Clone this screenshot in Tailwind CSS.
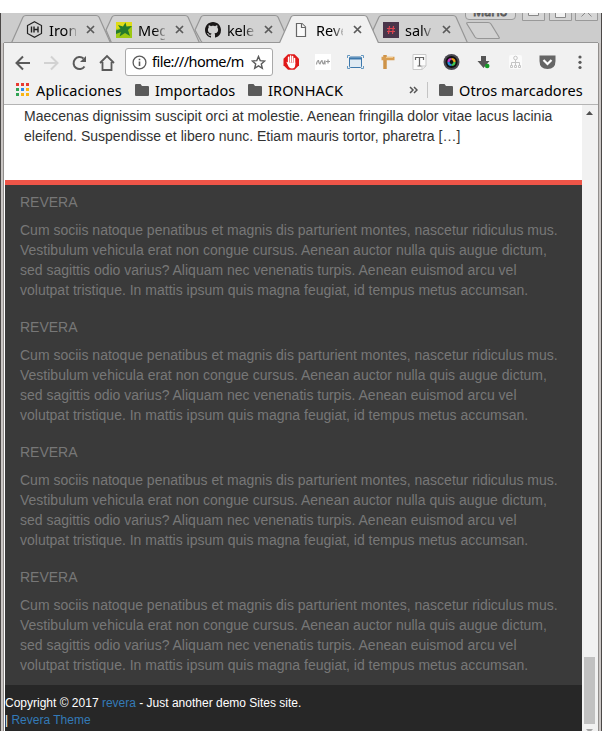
<!DOCTYPE html>
<html lang="es">
<head>
<meta charset="utf-8">
<title>Revera</title>
<script src="https://cdn.jsdelivr.net/npm/@tailwindcss/browser@4"></script>
</head>
<body class="w-[602px] h-[744px] overflow-hidden bg-white py-[13px]">
<div class="relative flex h-[718px] flex-col overflow-hidden border-l border-[#4b4847] bg-[#cccccc] font-['Noto_Sans',sans-serif] text-black">
  <!-- Tab strip -->
  <header class="relative h-[30px] shrink-0">
    <svg class="absolute -left-px top-0" width="602" height="30" viewBox="0 13 602 30" fill="none">
      <g fill="#d2d2d2" stroke="#969696" stroke-width="1.2">
        <path d="M373 30L379 17Q380 15.500 382 15.500H453Q455 15.500 456 17L468 44H374L373 42Z"/>
        <path d="M195 30L201 17Q202 15.500 204 15.500H275Q277 15.500 278 17L290 44H206Q203 44 201 41Z"/>
        <path d="M106 30L112 17Q113 15.500 115 15.500H185Q187 15.500 188 17L200 44H112Z"/>
        <path d="M11 44L23 17Q24 15.500 26 15.500H96Q98 15.500 99 17L111 44Z"/>
        <path d="M468 22.500H488Q490 22.500 491 24L499 37Q500 38.500 498 38.500H478Q476 38.500 475 37L467 24Q466 22.500 468 22.500Z"/>
      </g>
      <path d="M4 42.500H598" stroke="#969696"/>
      <path d="M279 44L291 17Q292 15.500 294 15.500H364Q366 15.500 367 17L379 44Z" fill="#f1f1f1" stroke="#969696" stroke-width="1.2"/>
      <g fill="#d5d5d5" stroke="#999">
        <path d="M465.500 10V16Q465.500 19.500 469 19.500H512Q515.500 19.500 515.500 16V10Z"/>
        <path d="M522.500 10V20.500H544.500V10ZM549.500 10V20.500H571.500V10ZM575.500 10V20.500H597.500V10Z"/>
      </g>
      <path d="M528.500 12V15.500H538.500V12M555.500 12V17.500H565.500V12M581.500 16.500L585 13M591.500 16.500L588 13" stroke="#888" fill="#f2f2f2"/>
      <path d="M601.500 13V43" stroke="#4b4847"/>
    </svg>
    <div class="absolute left-[472px] top-0 h-[5px] w-10 overflow-hidden text-[12.5px]"><span class="block -mt-[9px] leading-[16px] text-[#eee] [-webkit-text-stroke:0.9px_#555]">Mario</span></div>
    <div class="relative flex h-[30px] items-center pl-[25px] pt-[3px] text-[14.5px] leading-[20px]">
      <div class="flex w-[89px] items-center">
        <svg class="mr-[6px] shrink-0" width="17" height="17" viewBox="0 0 17 17" fill="none" stroke="#222"><path d="M8.500 .8L15.500 4.500V12.500L8.500 16.200L1.500 12.500V4.500Z" stroke-width="1.200"/><path d="M5.500 5.500V11.500M8 5.500V11.500M12 5.500V11.500M8 8.500H12" stroke-width="1.400"/></svg>
        <span class="w-[27px] overflow-hidden bg-linear-to-r from-black from-60% to-black/20 bg-clip-text text-transparent">Iron</span>
        <svg class="ml-[9.500px]" width="9" height="9" viewBox="0 0 9 9" stroke="#5a5a5a" stroke-width="1.700"><path d="M1 1L8 8M8 1L1 8"/></svg>
      </div>
      <div class="flex w-[89px] items-center pl-px">
        <svg class="mr-[6px] shrink-0" width="16" height="16" viewBox="0 0 16 16"><rect width="16" height="16" fill="#9cc814"/><path d="M0 0H16V4L0 7Z" fill="#e0dc18"/><path d="M9.500 .5L10.500 4.500L16 4L12 8L14 14L9 11L3.500 14.500L5 10L0 12V8.500L4.500 7L2 3L7 4.500Z" fill="#247a2c"/></svg>
        <span class="w-[27px] overflow-hidden bg-linear-to-r from-black from-60% to-black/20 bg-clip-text text-transparent">Meg</span>
        <svg class="ml-[9.500px]" width="9" height="9" viewBox="0 0 9 9" stroke="#5a5a5a" stroke-width="1.700"><path d="M1 1L8 8M8 1L1 8"/></svg>
      </div>
      <div class="flex w-[89px] items-center pl-px">
        <svg class="mr-[6px] shrink-0" width="16" height="16" viewBox="0 0 16 16" fill="#191717"><path d="M8 0C3.580 0 0 3.580 0 8c0 3.540 2.290 6.530 5.470 7.590.4.070.55-.17.55-.38 0-.19-.01-.82-.01-1.490-2.010.37-2.530-.49-2.690-.94-.09-.23-.48-.94-.82-1.130-.28-.15-.68-.52-.01-.53.63-.01 1.080.58 1.230.82.72 1.210 1.870.87 2.330.66.07-.52.28-.87.51-1.070-1.780-.2-3.640-.89-3.640-3.950 0-.87.31-1.590.82-2.150-.08-.2-.36-1.020.08-2.120 0 0 .67-.21 2.200.82.64-.18 1.320-.27 2-.27s1.360.09 2 .27c1.530-1.040 2.200-.82 2.200-.82.44 1.100.16 1.920.08 2.120.51.56.82 1.270.82 2.150 0 3.070-1.870 3.750-3.650 3.950.29.25.54.73.54 1.480 0 1.070-.01 1.930-.01 2.200 0 .21.15.46.55.38A8.010 8.010 0 0 0 16 8c0-4.420-3.580-8-8-8z"/></svg>
        <span class="w-[27px] overflow-hidden bg-linear-to-r from-black from-60% to-black/20 bg-clip-text tracking-[-0.2px] text-transparent">kele</span>
        <svg class="ml-[9.500px]" width="9" height="9" viewBox="0 0 9 9" stroke="#5a5a5a" stroke-width="1.700"><path d="M1 1L8 8M8 1L1 8"/></svg>
      </div>
      <div class="flex w-[89px] items-center">
        <svg class="mr-[7px] shrink-0" width="16" height="16" viewBox="0 0 16 16" fill="#fafafa" stroke="#666" stroke-width="1.200"><path d="M3.500 1.500H9L12.500 5V14.500H3.500Z"/><path d="M8.500 1.500V5.500H12.500"/></svg>
        <span class="w-[27px] overflow-hidden bg-linear-to-r from-black from-60% to-black/20 bg-clip-text text-transparent">Reve</span>
        <svg class="ml-[9.500px]" width="9" height="9" viewBox="0 0 9 9" stroke="#5a5a5a" stroke-width="1.700"><path d="M1 1L8 8M8 1L1 8"/></svg>
      </div>
      <div class="flex w-[89px] items-center pl-px">
        <svg class="mr-[6px] shrink-0" width="16" height="16" viewBox="0 0 16 16"><rect width="16" height="16" fill="#49354a"/><path d="M6.500 4L5.500 12M10.500 4L9.500 12M4 6.500H12M4 9.500H12" stroke="#dd4450" stroke-width="1.200"/></svg>
        <span class="w-[27px] overflow-hidden bg-linear-to-r from-black from-60% to-black/20 bg-clip-text text-transparent">salv</span>
        <svg class="ml-[9.500px]" width="9" height="9" viewBox="0 0 9 9" stroke="#5a5a5a" stroke-width="1.700"><path d="M1 1L8 8M8 1L1 8"/></svg>
      </div>
    </div>
  </header>

  <div class="flex min-h-0 flex-1 border-l-2 border-[#cac6c4]">
   <div class="flex min-w-0 flex-1 flex-col border-l border-[#918e8c] bg-[#f1f1f1]">
    <!-- Toolbar -->
    <div class="flex h-[38px] shrink-0 items-center pl-[11px]">
      <svg class="mt-px shrink-0" width="101" height="18" viewBox="15 53 101 18" fill="none" stroke="#5a5a5a" stroke-width="2"><path d="M30 62H17M23 55.500L16.500 62L23 68.500"/><path d="M44 62H57M51 55.500L57.500 62L51 68.500" stroke="#d2d2d2"/><path d="M84.500 65.500A6 6 0 1 1 83.500 57.500"/><path d="M86 55V61H80Z" fill="#5a5a5a" stroke="none"/><path d="M100 62L107 55L114 62M102.500 61V69H111.500V61" stroke-width="1.800"/></svg>
      <div class="ml-[9px] flex h-[28px] w-[148px] shrink-0 items-center rounded-[3px] border border-[#a9a9a9] bg-white pl-[5.500px]">
        <svg class="shrink-0" width="15" height="15" viewBox="0 0 15 15" fill="none" stroke="#5a5a5a"><circle cx="7.500" cy="7.500" r="6.400" stroke-width="1.300"/><path d="M7.500 6.500V11M7.500 3.700V5.300" stroke-width="1.600"/></svg>
        <span class="ml-[5.500px] w-[97px] whitespace-nowrap text-[14.500px] tracking-[-0.52px]">file:///home/m</span>
        <svg class="ml-[2px] shrink-0" width="15" height="15" viewBox="0 0 15 15" fill="none" stroke="#5a5a5a" stroke-width="1.400"><path d="M7.500 1.500L9.200 5.600L13.700 6L10.300 8.900L11.300 13.300L7.500 10.900L3.700 13.300L4.700 8.900L1.300 6L5.800 5.600Z"/></svg>
      </div>
      <svg class="ml-[9px] shrink-0" width="306" height="20" viewBox="282 52 306 20" fill="none">
        <path d="M288 54.300H294.500L299 58.800V65.200L294.500 69.700H288L283.500 65.200V58.800Z" fill="#e01818"/><path d="M288.600 57.200V63M290.600 56V62M292.600 56.500V62M294.500 58.500V64" stroke="#fff" stroke-width="1.500" stroke-linecap="round"/><path d="M286.300 61.800L288.300 62.500H295.200V65.500Q295 68.300 292 68.500Q289.500 68.500 288.500 66.500Z" fill="#fff"/>
        <rect x="315" y="54" width="16" height="16" fill="#fff"/><path d="M316.500 64.500Q317 60.500 318.500 60.500Q319 64 320 64Q321 60.500 322 60.500Q322.500 64 323.500 64L325 60.500V64.500M326 61.500H330M328 59.500V63.500" stroke="#999" stroke-width="1.200"/>
        <rect x="349.500" y="57" width="12" height="10.500" rx="1" fill="#dfeaf3" stroke="#3d78ac"/><path d="M349.500 58.500H361.500" stroke="#3d78ac" stroke-width="2"/><path d="M347.500 58V55.500H350M361 55.500H363.500V58M363.500 66V68.500H361M350 68.500H347.500V66" stroke="#6699c2"/>
        <path d="M385 55V69" stroke="#ce9348" stroke-width="3.500"/><path d="M381.500 58.500H394.500" stroke="#d99e52" stroke-width="3.500"/><path d="M386 57.500H393" stroke="#f0c98c"/>
        <path d="M413 54.500H426V66L422 69.500H413Z" fill="#fcfcfc" stroke="#c9c9c9"/><path d="M426 66H422V69.500" stroke="#c9c9c9"/><path d="M415.500 60V57.500H423.500V60M419.500 57.500V66M417.500 66H421.500" stroke="#666" stroke-width="1.200"/>
        <circle cx="451.500" cy="62" r="8" fill="#4a4850"/><circle cx="451.500" cy="62" r="6" fill="#111"/><path d="M448.500 62A3 3 0 0 1 451.500 59" stroke="#c43ccc" stroke-width="2.200"/><path d="M451.500 59A3 3 0 0 1 454.500 62" stroke="#efa41c" stroke-width="2.200"/><path d="M454.500 62A3 3 0 0 1 451.500 65" stroke="#42c650" stroke-width="2.200"/><path d="M451.500 65A3 3 0 0 1 448.500 62" stroke="#268de0" stroke-width="2.200"/>
        <path d="M481 56H486V61H489.500L483.500 68L477.500 61H481Z" fill="#555"/><circle cx="487.200" cy="66" r="2.300" fill="#159926"/>
        <rect x="509" y="55" width="13" height="14" rx="2" fill="#fbfbfb"/><circle cx="515.500" cy="58" r="1.800" stroke="#c5c5c5"/><path d="M515.500 60V66M511.500 65V62.500H519.500V65" stroke="#c5c5c5"/><path d="M510.500 65.500H512.500V67.500H510.500ZM514.500 65.500H516.500V67.500H514.500ZM518.500 65.500H520.500V67.500H518.500Z" stroke="#c5c5c5"/>
        <path d="M539.500 55.500H555.500V61Q555.500 69 547.500 69Q539.500 69 539.500 61Z" fill="#666"/><path d="M543.500 60L547.500 64L551.500 60" stroke="#fff" stroke-width="2.200"/>
        <g fill="#5a5a5a"><circle cx="580" cy="57" r="1.600"/><circle cx="580" cy="62.300" r="1.600"/><circle cx="580" cy="67.500" r="1.600"/></g>
      </svg>
    </div>
    <!-- Bookmarks -->
    <div class="flex h-[24px] shrink-0 items-center border-b border-[#b4b4b4] pb-[6px] pl-[12px] text-[14.5px] leading-[18px] whitespace-nowrap">
      <div class="grid w-[13px] shrink-0 grid-cols-3 gap-[2px]">
        <i class="size-[3px] bg-[#e93b32]"></i><i class="size-[3px] bg-[#e93b32]"></i><i class="size-[3px] bg-[#e93b32]"></i>
        <i class="size-[3px] bg-[#31a354]"></i><i class="size-[3px] bg-[#2d8ae8]"></i><i class="size-[3px] bg-[#f9b514]"></i>
        <i class="size-[3px] bg-[#31a354]"></i><i class="size-[3px] bg-[#f9b514]"></i><i class="size-[3px] bg-[#f9b514]"></i>
      </div>
      <span class="ml-[7px] w-[99px] tracking-[0.12px]">Aplicaciones</span>
      <svg class="shrink-0" width="14" height="12" viewBox="0 0 14 12" fill="#5a5a5a"><path d="M1 0H5.500L7 2H13Q14 2 14 3V11Q14 12 13 12H1Q0 12 0 11V1Q0 0 1 0Z"/></svg>
      <span class="ml-[6px] w-[93px]">Importados</span>
      <svg class="shrink-0" width="14" height="12" viewBox="0 0 14 12" fill="#5a5a5a"><path d="M1 0H5.500L7 2H13Q14 2 14 3V11Q14 12 13 12H1Q0 12 0 11V1Q0 0 1 0Z"/></svg>
      <span class="ml-[6px] w-[141px] tracking-[0.12px]">IRONHACK</span>
      <svg class="shrink-0" width="9" height="8" viewBox="0 0 9 8" fill="none" stroke="#555" stroke-width="1.500"><path d="M1 1L4 4L1 7M5 1L8 4L5 7"/></svg>
      <span class="ml-[9px] mr-[11px] h-[16px] w-px bg-[#c4c4c4]"></span>
      <svg class="shrink-0" width="14" height="12" viewBox="0 0 14 12" fill="#5a5a5a"><path d="M1 0H5.500L7 2H13Q14 2 14 3V11Q14 12 13 12H1Q0 12 0 11V1Q0 0 1 0Z"/></svg>
      <span class="ml-[6px] tracking-[0.06px]">Otros marcadores</span>
    </div>
    <!-- Page -->
    <div class="flex min-h-0 flex-1">
      <main class="flex w-[578px] shrink-0 flex-col border-l border-white bg-white font-['Liberation_Sans',sans-serif] text-[14px] leading-[20px] text-[#333]">
        <p class="h-[75px] shrink-0 pl-[19px] pt-px whitespace-nowrap tracking-[0.008px]">Maecenas dignissim suscipit orci at molestie. Aenean fringilla dolor vitae lacus lacinia<br>eleifend. Suspendisse et libero nunc. Etiam mauris tortor, pharetra […]</p>
        <div class="h-[505px] shrink-0 border-t-[5px] border-[#ee5548] bg-[#3a3a3a] pl-[15px] pt-[7px] whitespace-nowrap text-[#777]">
          <section class="h-[125px]"><h3 class="mb-[8px]">REVERA</h3><p>Cum sociis natoque penatibus et magnis dis parturient montes, nascetur ridiculus mus.<br>Vestibulum vehicula erat non congue cursus. Aenean auctor nulla quis augue dictum,<br>sed sagittis odio varius? Aliquam nec venenatis turpis. Aenean euismod arcu vel<br>volutpat tristique. In mattis ipsum quis magna feugiat, id tempus metus accumsan.</p></section>
          <section class="h-[125px]"><h3 class="mb-[8px]">REVERA</h3><p>Cum sociis natoque penatibus et magnis dis parturient montes, nascetur ridiculus mus.<br>Vestibulum vehicula erat non congue cursus. Aenean auctor nulla quis augue dictum,<br>sed sagittis odio varius? Aliquam nec venenatis turpis. Aenean euismod arcu vel<br>volutpat tristique. In mattis ipsum quis magna feugiat, id tempus metus accumsan.</p></section>
          <section class="h-[125px]"><h3 class="mb-[8px]">REVERA</h3><p>Cum sociis natoque penatibus et magnis dis parturient montes, nascetur ridiculus mus.<br>Vestibulum vehicula erat non congue cursus. Aenean auctor nulla quis augue dictum,<br>sed sagittis odio varius? Aliquam nec venenatis turpis. Aenean euismod arcu vel<br>volutpat tristique. In mattis ipsum quis magna feugiat, id tempus metus accumsan.</p></section>
          <section><h3 class="mb-[8px]">REVERA</h3><p>Cum sociis natoque penatibus et magnis dis parturient montes, nascetur ridiculus mus.<br>Vestibulum vehicula erat non congue cursus. Aenean auctor nulla quis augue dictum,<br>sed sagittis odio varius? Aliquam nec venenatis turpis. Aenean euismod arcu vel<br>volutpat tristique. In mattis ipsum quis magna feugiat, id tempus metus accumsan.</p></section>
        </div>
        <footer class="flex-1 bg-[#272727] pt-[10px] text-[12px] leading-[17px] text-white">Copyright © 2017 <a class="text-[#337ab7]">revera</a> - Just another demo Sites site.<br>| <a class="text-[#337ab7]">Revera Theme</a></footer>
      </main>
      <div class="flex w-[15px] flex-col items-center bg-[#f1f1f1]">
        <svg class="mt-[6px] shrink-0" width="7" height="4" fill="#505050"><path d="M0 4L3.500 0L7 4Z"/></svg>
        <div class="mt-[542px] h-[67px] w-[11px] shrink-0 bg-[#c1c1c1]"></div>
        <svg class="mt-[5px] shrink-0" width="7" height="4" fill="#a3a3a3"><path d="M0 0H7L3.500 4Z"/></svg>
      </div>
    </div>
   </div>
   <div class="w-[4px] shrink-0 border-l border-r border-l-[#918e8c] border-r-[#4b4847] bg-[#cac6c4]"></div>
  </div>
</div>
</body>
</html>
